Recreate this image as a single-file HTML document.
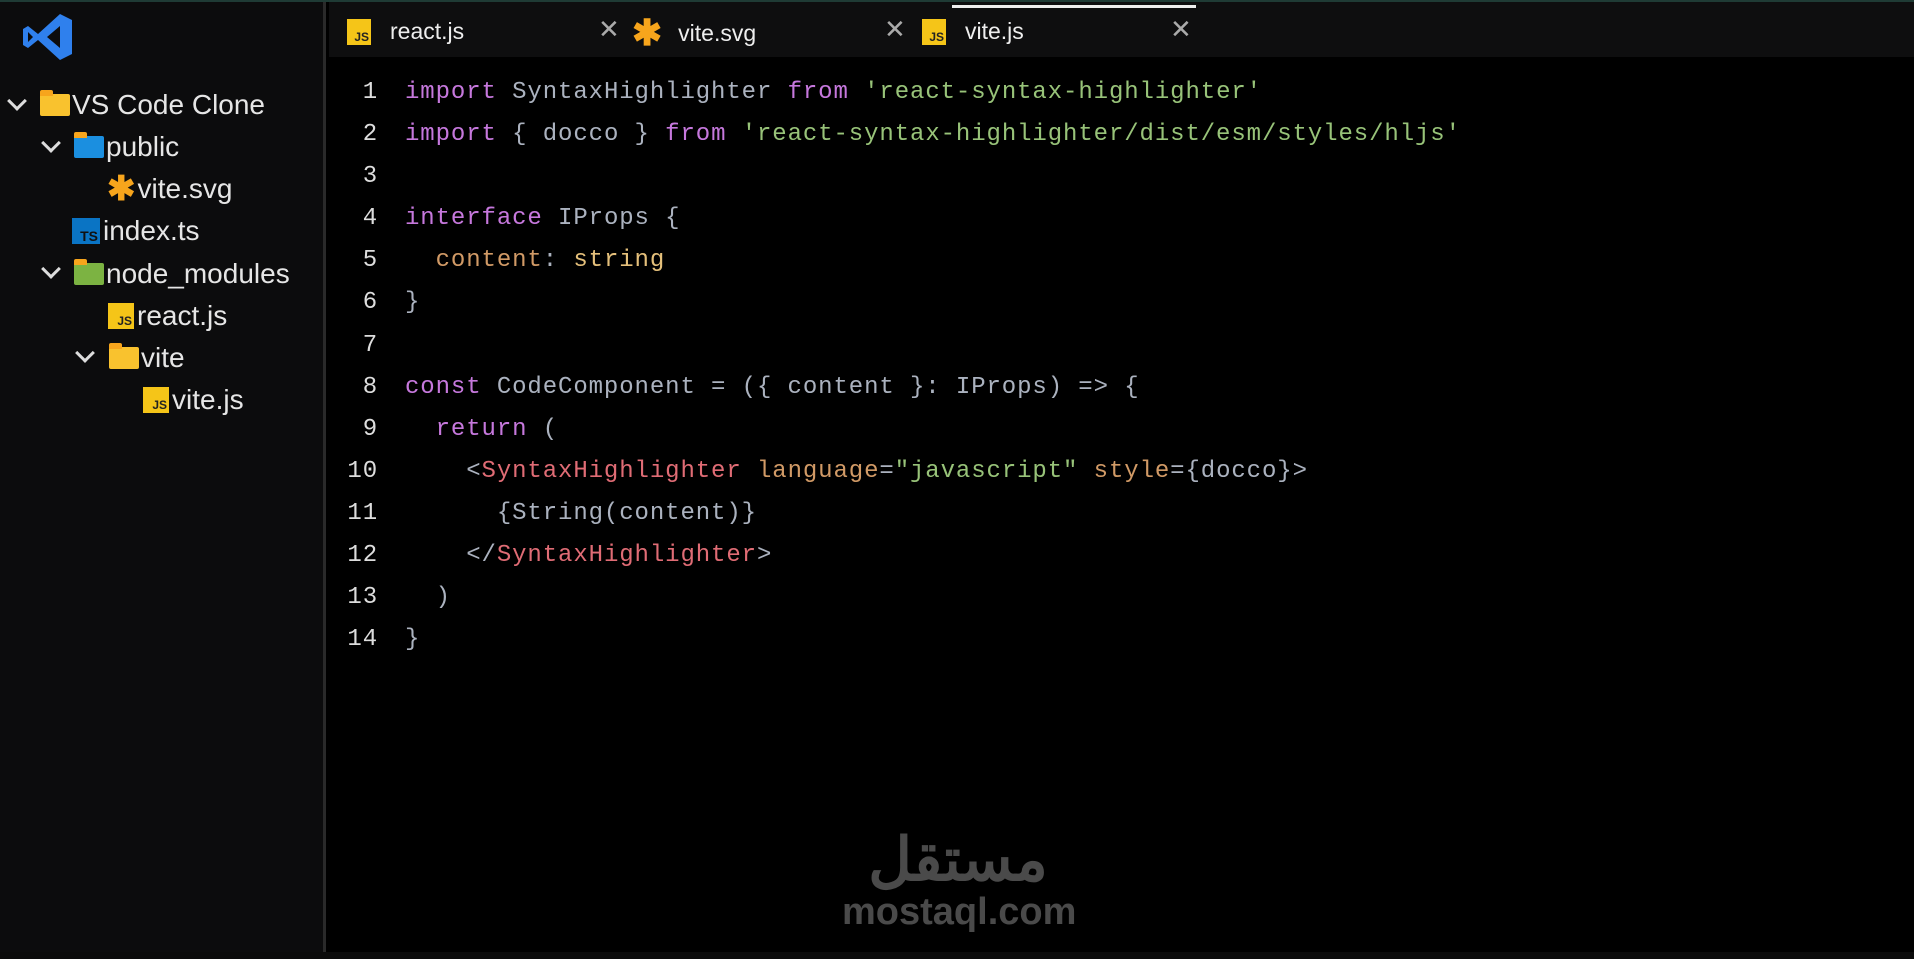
<!DOCTYPE html>
<html><head><meta charset="utf-8"><style>
*{margin:0;padding:0;box-sizing:border-box}
body{width:1914px;height:959px;background:#000;overflow:hidden;position:relative;font-family:"Liberation Sans",sans-serif}
.top{position:absolute;left:0;top:0;width:1914px;height:2px;background:#1f3b35}
.side{position:absolute;left:0;top:2px;width:326px;height:950px;background:#0c0c0d;border-right:3px solid #2a2a2a}
.tabs{position:absolute;left:329px;top:2px;width:1585px;height:55px;background:#0e0e0f}
.bot{position:absolute;left:0;top:952px;width:1914px;height:7px;background:#0b0b0b}
.row{position:absolute;color:#e6e6e6;font-size:28px;height:34px;line-height:34px;white-space:nowrap;display:flex;align-items:center}
.chev{position:absolute;width:14px;height:14px;border-right:3px solid #ddd;border-bottom:3px solid #ddd;transform:rotate(45deg)}
.js{display:inline-block;width:26px;height:26px;background:#f5c518;color:#222;font-size:12px;font-weight:bold;text-align:right;line-height:36px;padding-right:2px;margin-right:3px;overflow:hidden}
.ts{display:inline-block;width:28px;height:26px;background:#0a74c4;color:#111;font-size:14px;font-weight:bold;text-align:right;line-height:36px;padding-right:2px;margin-right:3px;overflow:hidden}
.fold{display:inline-block;width:30px;height:22px;background:#f9c22e;border-radius:2px;position:relative;margin-right:2px}
.fold:before{content:"";position:absolute;left:0;top:-4px;width:13px;height:6px;background:#f7a51c;border-radius:2px 2px 0 0}
.star{color:#f7a51c;font-size:34px;font-weight:bold;margin-right:2px}
.tab{position:absolute;top:18px;color:#eee;font-size:23px;display:flex;align-items:center}
.x{position:absolute;top:14px;color:#aaa;font-size:26px}
.code{position:absolute;left:340px;top:72px;font-family:"Liberation Mono",monospace;font-size:24px;letter-spacing:0.9px;line-height:42.1px;color:#abb2bf;white-space:pre}
.ln{display:inline-block;width:38px;text-align:right;color:#ddd;margin-right:27px}
.k{color:#c678dd}.s{color:#98c379}.p{color:#d19a66}.y{color:#e5c07b}.t{color:#e06c75}
.wm{position:absolute;left:842px;top:828px;color:#4a4a4a;text-align:center;width:232px;font-weight:bold}
</style></head><body>
<div class="top"></div>
<div class="side">
<svg style="position:absolute;left:22px;top:10px" width="52" height="50" viewBox="0 0 52 50"><path d="M38 2 L50 8 V42 L38 48 L16 28 L6 36 L1 33 V17 L6 14 L16 22 Z M38 14 L25 25 L38 36 Z M6 20 V30 L11 25 Z" fill="#2f80ed" fill-rule="evenodd"/></svg>
</div>
<div class="row" style="left:40px;top:88px"><span class="fold"></span>VS Code Clone</div>
<div class="chev" style="left:10px;top:94px"></div>
<div class="chev" style="left:44px;top:136px"></div>
<div class="row" style="left:74px;top:130px"><span class="fold" style="background:#1b8fe0"></span>public</div>
<div class="row" style="left:107px;top:172px"><span class="star">✱</span>vite.svg</div>
<div class="row" style="left:72px;top:214px"><span class="ts">TS</span>index.ts</div>
<div class="chev" style="left:44px;top:262px"></div>
<div class="row" style="left:74px;top:257px"><span class="fold" style="background:#7cb342"></span>node_modules</div>
<div class="row" style="left:108px;top:299px"><span class="js">JS</span>react.js</div>
<div class="chev" style="left:78px;top:346px"></div>
<div class="row" style="left:109px;top:341px"><span class="fold"></span>vite</div>
<div class="row" style="left:143px;top:383px"><span class="js">JS</span>vite.js</div>
<div class="tabs"></div>
<div style="position:absolute;left:952px;top:5px;width:244px;height:3px;background:#eee"></div>
<div class="tab" style="left:347px"><span class="js" style="width:24px;height:26px">JS</span><span style="margin-left:16px">react.js</span></div>
<div class="x" style="left:598px">✕</div>
<div class="tab" style="left:632px;top:12px"><span class="star" style="font-size:36px">✱</span><span style="margin-left:14px">vite.svg</span></div>
<div class="x" style="left:884px">✕</div>
<div class="tab" style="left:922px"><span class="js" style="width:24px;height:26px">JS</span><span style="margin-left:16px">vite.js</span></div>
<div class="x" style="left:1170px">✕</div>
<div class="code"><span class="ln">1</span><span class="k">import</span> SyntaxHighlighter <span class="k">from</span> <span class="s">'react-syntax-highlighter'</span>
<span class="ln">2</span><span class="k">import</span> { docco } <span class="k">from</span> <span class="s">'react-syntax-highlighter/dist/esm/styles/hljs'</span>
<span class="ln">3</span>
<span class="ln">4</span><span class="k">interface</span> IProps {
<span class="ln">5</span>  <span class="p">content</span>: <span class="y">string</span>
<span class="ln">6</span>}
<span class="ln">7</span>
<span class="ln">8</span><span class="k">const</span> CodeComponent = ({ content }: IProps) => {
<span class="ln">9</span>  <span class="k">return</span> (
<span class="ln">10</span>    &lt;<span class="t">SyntaxHighlighter</span> <span class="p">language</span>=<span class="s">"javascript"</span> <span class="p">style</span>={docco}&gt;
<span class="ln">11</span>      {String(content)}
<span class="ln">12</span>    &lt;/<span class="t">SyntaxHighlighter</span>&gt;
<span class="ln">13</span>  )
<span class="ln">14</span>}</div>
<div class="wm"><div style="font-family:'Liberation Sans','Noto Sans CJK SC',sans-serif;font-size:60px;line-height:64px">مستقل</div><div style="font-size:38px;line-height:40px">mostaql.com</div></div>
<div class="bot"></div>
</body></html>
